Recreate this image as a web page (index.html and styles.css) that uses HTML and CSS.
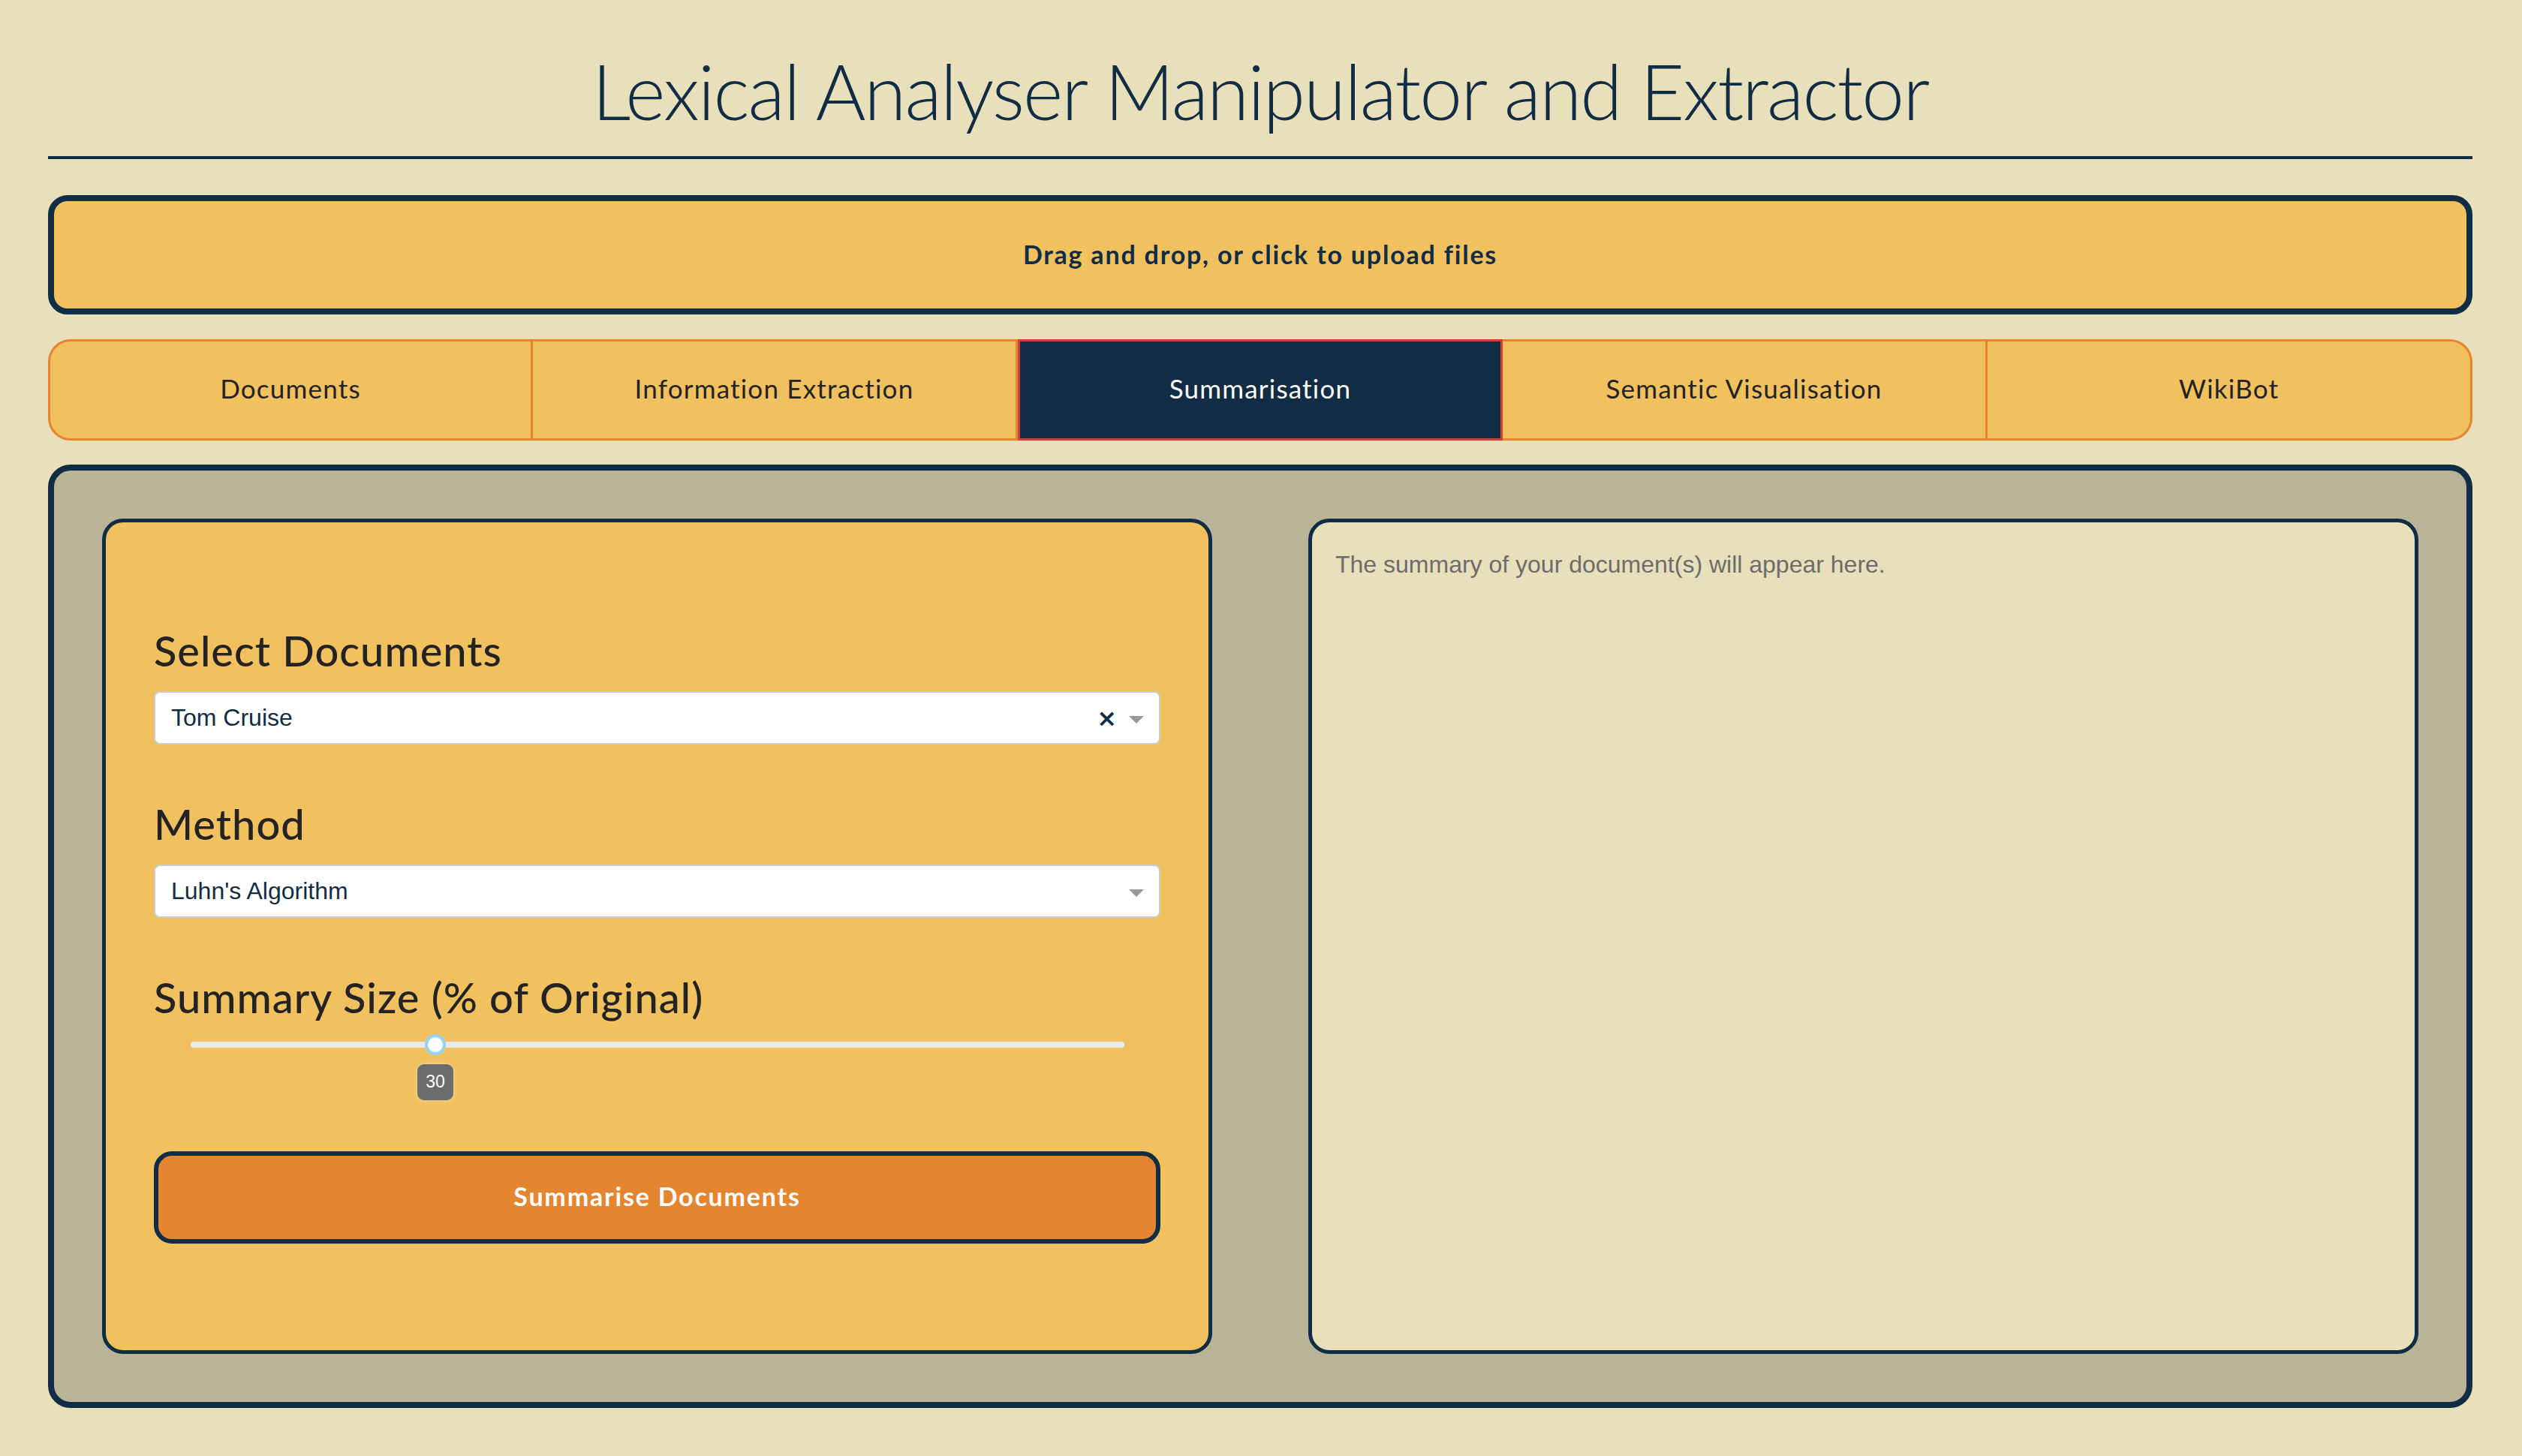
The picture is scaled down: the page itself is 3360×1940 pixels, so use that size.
FILE: index.html
```html
<!DOCTYPE html>
<html lang="en">
<head>
<meta charset="utf-8">
<title>Lexical Analyser Manipulator and Extractor</title>
<link rel="stylesheet" href="styles.css">
</head>
<body>
<header class="header">
  <h1 class="title">Lexical Analyser Manipulator and Extractor</h1>
</header>

<div class="upload">Drag and drop, or click to upload files</div>

<nav class="tabs">
  <div class="tab tab-first">Documents</div>
  <div class="tab">Information Extraction</div>
  <div class="tab tab-active">Summarisation</div>
  <div class="tab">Semantic Visualisation</div>
  <div class="tab tab-last">WikiBot</div>
</nav>

<main class="panel">
  <section class="card card-controls">
    <h3 class="label label-first">Select Documents</h3>
    <div class="select">
      <span class="select-value">Tom Cruise</span>
      <span class="select-icons">
        <span class="select-clear">×</span>
        <span class="select-arrow"></span>
      </span>
    </div>

    <h3 class="label">Method</h3>
    <div class="select">
      <span class="select-value">Luhn's Algorithm</span>
      <span class="select-icons">
        <span class="select-arrow"></span>
      </span>
    </div>

    <h3 class="label">Summary Size (% of Original)</h3>
    <div class="slider">
      <div class="slider-track">
        <div class="slider-handle" style="left: 26.2%;">
          <div class="slider-tip">30</div>
        </div>
      </div>
    </div>

    <button class="btn">Summarise Documents</button>
  </section>

  <section class="card card-output">
    <p class="placeholder">The summary of your document(s) will appear here.</p>
  </section>
</main>
</body>
</html>
```

FILE: styles.css
```css
* { box-sizing: border-box; }

html, body {
  margin: 0;
  padding: 0;
}

body {
  background: #e8e0bb;
  color: #112d45;
  font-family: "Lato", "Noto Sans", sans-serif;
  padding: 0 66px 64px 64px;
  min-height: 1940px;
}

.header {
  border-bottom: 4px solid #112d45;
  height: 212px;
  display: flex;
  justify-content: center;
  align-items: flex-start;
}

.title {
  margin: 0;
  padding-top: 60px;
  font-family: "Lato", sans-serif;
  font-weight: 300;
  font-size: 102px;
  line-height: 1.2;
  letter-spacing: -2px;
  color: #112d45;
  white-space: nowrap;
}

.upload {
  margin-top: 48px;
  height: 159px;
  border: 8px solid #112d45;
  border-radius: 26px;
  background: #f1c05f;
  display: flex;
  align-items: center;
  justify-content: center;
  padding-bottom: 3px;
  font-size: 34px;
  font-weight: 700;
  letter-spacing: 1.8px;
  color: #112d45;
}

.tabs {
  margin-top: 33px;
  height: 135px;
  display: grid;
  grid-template-columns: repeat(5, 1fr);
}

.tab {
  background: #f1c05f;
  border: 3px solid #e7852f;
  border-left: 0;
  display: flex;
  align-items: center;
  justify-content: center;
  padding-bottom: 6px;
  font-size: 35px;
  font-weight: 400;
  color: #232323;
  letter-spacing: 1.2px;
}

.tab-first {
  border-left: 3px solid #e7852f;
  border-radius: 30px 0 0 30px;
}

.tab-last {
  border-radius: 0 30px 30px 0;
}

.tab-active {
  background: #112d45;
  color: #ffffff;
  border: 3px solid #d13f36;
}

.panel {
  margin-top: 32px;
  height: 1257px;
  border: 8px solid #112d45;
  border-radius: 30px;
  background: #b9b497;
  padding: 64px;
  display: grid;
  grid-template-columns: 1fr 1fr;
  gap: 128px;
}

.card {
  border: 5px solid #112d45;
  border-radius: 28px;
}

.card-controls {
  background: #f1c05f;
  padding: 137px 64px 0 64px;
  display: flex;
  flex-direction: column;
}

.card-output {
  background: #e8e0bb;
  padding: 37px 31px;
}

.label {
  margin: 72px 0 21px 0;
  font-family: "Lato", sans-serif;
  font-weight: 500;
  font-size: 56px;
  line-height: 1.2;
  letter-spacing: 1px;
  color: #232323;
}

.label-first {
  margin-top: 0;
}

.select {
  height: 71px;
  background: #ffffff;
  border: 2px solid #cccccc;
  border-radius: 8px;
  display: flex;
  align-items: center;
  justify-content: space-between;
  padding: 0 20px 0 21px;
  font-family: "Liberation Sans", Arial, sans-serif;
  font-size: 32px;
  color: #112d45;
}

.select-icons {
  display: flex;
  align-items: center;
  gap: 16px;
}

.select-clear {
  font-family: "DejaVu Sans", sans-serif;
  font-weight: 700;
  font-size: 32px;
  color: #112d45;
  line-height: 1;
}

.select-arrow {
  width: 0;
  height: 0;
  border-left: 10px solid transparent;
  border-right: 10px solid transparent;
  border-top: 10px solid #999999;
  margin-top: 4px;
}

.slider {
  padding: 4px 48px 0 49px;
  height: 150px;
}

.slider-track {
  position: relative;
  height: 8px;
  border-radius: 4px;
  background: #e9e9e9;
}

.slider-handle {
  position: absolute;
  top: -10px;
  width: 28px;
  height: 28px;
  margin-left: -14px;
  border-radius: 50%;
  background: #ffffff;
  border: 4px solid #96d4f3;
}

.slider-tip {
  position: absolute;
  top: 36px;
  left: 50%;
  transform: translateX(-50%);
  width: 48px;
  height: 48px;
  border-radius: 9px;
  background: #6c6c6c;
  color: #ffffff;
  font-family: "Liberation Sans", Arial, sans-serif;
  font-size: 23px;
  display: flex;
  align-items: center;
  justify-content: center;
  box-shadow: 0 0 8px rgba(255, 255, 255, 0.35);
}

.btn {
  height: 123px;
  border: 6px solid #112d45;
  border-radius: 24px;
  background: #e6852f;
  color: #ffffff;
  font-family: "Lato", sans-serif;
  font-size: 34px;
  font-weight: 700;
  letter-spacing: 1.8px;
  padding-bottom: 4px;
  cursor: pointer;
}

.placeholder {
  margin: 0;
  font-family: "Liberation Sans", Arial, sans-serif;
  font-size: 32px;
  line-height: 1.2;
  color: #6c6c6c;
}
```
